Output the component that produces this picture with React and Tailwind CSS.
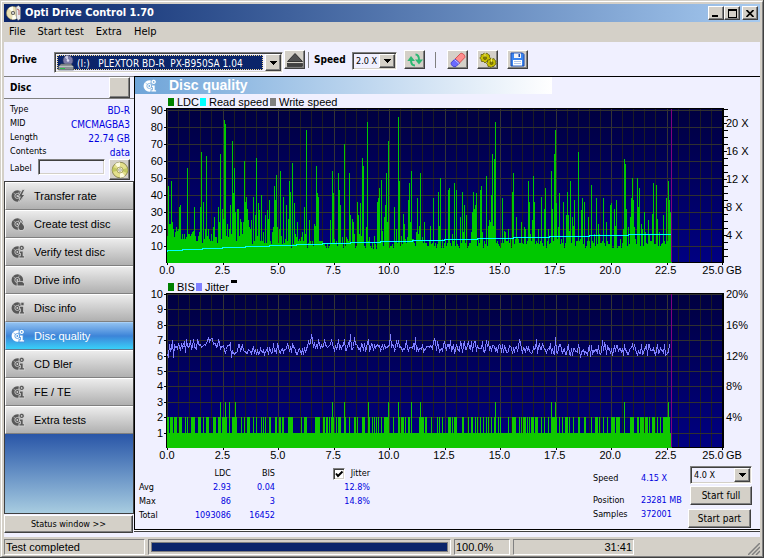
const UI = 'font-["DejaVu_Sans_Condensed","DejaVu_Sans",sans-serif]';
const ARIAL = 'font-["Liberation_Sans",Arial,sans-serif]';

const raised =
  'border border-t-white border-l-white border-r-[#404040] border-b-[#404040] bg-[#d4d0c8] shadow-[inset_-1px_-1px_0_#808080]';
const sunken = 'border border-t-[#808080] border-l-[#808080] border-r-white border-b-white';
const sunkenDeep = `${sunken} shadow-[inset_1px_1px_0_#404040,inset_-1px_-1px_0_#d4d0c8]`;

// plot area inside the 625x185 chart drawing
const LEFT = 32;
const TOP = 15;
const BOTTOM = 169;
const RIGHT = 588;
const SAMPLES = 505;

const LDC_HEAD = [
  16, 45, 23, 23, 48, 24, 20, 15, 18, 21, 19, 20, 33, 34, 14, 17, 14, 17, 14, 15, 56, 17, 17, 16, 17, 18, 19, 33, 16, 13,
  13, 16, 18, 33, 65, 12, 36, 14, 20, 63, 16, 20, 14, 13, 17, 13, 21, 27, 15, 15, 12, 33, 24, 64, 14, 32, 26, 84, 82, 16,
  23, 15, 20, 34, 17, 72, 41, 56, 30, 13, 32, 32, 16, 26, 24, 17, 24, 60, 36, 39, 32, 25, 21, 20, 25, 11, 39, 13, 28, 62,
  16, 35, 31, 13, 40, 13, 18, 12, 28, 12, 31, 26, 37, 13, 11, 18, 21, 45, 37, 52, 21, 12, 20, 54, 16, 11, 39, 12, 14, 34,
  13, 26, 48, 42, 9, 59, 11, 35, 17, 15, 24, 13, 14, 13, 15, 18, 13, 33, 17, 78, 9, 12, 25, 13, 11, 13, 10, 23, 22, 57,
  41, 39, 13, 13, 13, 13, 11, 11, 10, 9, 11, 9, 10, 25, 12, 54, 41, 14, 12, 13, 10, 53, 43, 34, 12, 15, 9, 70, 10, 15,
  14, 13, 53, 28, 12, 26, 24, 17, 9, 10, 36, 28, 17, 35, 16, 62, 57, 10, 9, 21, 83, 13, 15, 10, 9, 12, 8, 16, 11, 8,
  36, 38, 44, 12, 49, 19, 10, 27, 34, 53, 24, 72,
];

const LDC_PEAKS = {
  227: 33, 229: 20, 231: 86, 232: 48, 234: 16, 236: 29, 237: 23, 240: 15, 241: 37, 242: 47, 243: 24, 244: 54, 249: 18,
  250: 38, 251: 17, 252: 22, 253: 53, 255: 15, 257: 24, 263: 22, 266: 38, 271: 42, 272: 22, 273: 50, 278: 20, 281: 43,
  282: 44, 285: 17, 287: 47, 289: 43, 293: 27, 295: 42, 296: 18, 297: 34, 299: 28, 304: 18, 305: 30, 306: 42, 307: 32,
  308: 34, 309: 41, 313: 43, 314: 45, 315: 18, 319: 51, 321: 22, 322: 25, 323: 24, 324: 40, 325: 64, 326: 22, 327: 61,
  328: 83, 335: 38, 337: 19, 338: 18, 341: 20, 345: 42, 346: 53, 349: 27, 350: 15, 354: 24, 357: 21, 358: 20, 361: 48,
  362: 36, 363: 17, 365: 25, 366: 51, 367: 36, 371: 20, 374: 39, 377: 32, 378: 44, 381: 20, 384: 54, 385: 32, 387: 64,
  388: 78, 389: 35, 391: 21, 392: 41, 396: 36, 399: 28, 400: 42, 401: 28, 402: 19, 403: 48, 405: 27, 406: 22, 407: 37,
  411: 65, 414: 31, 415: 38, 417: 36, 421: 27, 424: 46, 427: 17, 429: 38, 431: 23, 432: 17, 436: 38, 439: 24, 443: 34,
  444: 35, 447: 32, 448: 22, 449: 37, 456: 20, 457: 61, 458: 58, 459: 32, 461: 21, 463: 27, 464: 38, 465: 50, 466: 37,
  467: 21, 470: 50, 471: 33, 472: 44, 474: 23, 475: 20, 477: 30, 478: 18, 481: 25, 482: 17, 485: 29, 486: 47, 489: 46,
  490: 26, 492: 18, 496: 28, 499: 38, 501: 48, 502: 37, 503: 30, 504: 27,
};

// [first, last] sample of every run that reaches 2
const BIS_RUNS = [
  [0, 1], [3, 5], [7, 9], [12, 14], [18, 18], [20, 20], [24, 27], [31, 33], [36, 36], [39, 41], [46, 48], [51, 53],
  [55, 59], [62, 62], [65, 69], [74, 74], [77, 77], [80, 82], [86, 86], [89, 89], [94, 94], [96, 96], [98, 98],
  [102, 103], [108, 109], [112, 113], [115, 116], [121, 125], [134, 134], [137, 139], [148, 152], [156, 157],
  [159, 160], [162, 162], [164, 166], [169, 169], [171, 173], [177, 178], [182, 182], [187, 188], [190, 190],
  [195, 197], [201, 202], [205, 205], [207, 207], [209, 209], [211, 211], [214, 214], [217, 221], [226, 226],
  [231, 232], [234, 236], [238, 238], [241, 242], [244, 244], [252, 256], [258, 259], [264, 264], [270, 270],
  [272, 272], [275, 275], [281, 283], [285, 285], [287, 289], [295, 296], [301, 301], [304, 305], [308, 308],
  [310, 310], [313, 313], [316, 316], [319, 319], [321, 321], [324, 324], [327, 328], [331, 331], [333, 333],
  [341, 341], [345, 348], [352, 352], [354, 354], [356, 358], [360, 360], [362, 362], [364, 366], [368, 370],
  [374, 374], [377, 377], [381, 381], [384, 389], [392, 392], [395, 395], [398, 400], [402, 402], [406, 406],
  [411, 412], [417, 418], [424, 424], [428, 430], [432, 432], [436, 436], [440, 440], [444, 447], [449, 452],
  [457, 457], [463, 466], [470, 471], [473, 476], [478, 480], [482, 482], [485, 487], [490, 490], [493, 493],
  [496, 502], [504, 504],
];
const BIS_THREES = [53, 58, 62, 68, 165, 177, 201, 221, 231, 244, 253, 328, 384, 388, 457, 501];

// [first sample, level]; the level drifts linearly up to the next entry
const JITTER_BASE = [[0, 6.2], [5, 6.6], [12, 6.4], [20, 6.6], [40, 6.8], [55, 6.6], [66, 6.35], [110, 6.4], [138, 6.4], [145, 6.7], [230, 6.6], [340, 6.5], [420, 6.3], [504, 6.35]];
const JITTER_PEAKS = { 0: 6.1, 6: 5.9, 19: 7.1, 43: 7.1, 64: 5.9, 144: 7.4, 183: 7.4, 187: 7.2, 201: 7.1, 223: 7.4, 239: 7, 248: 7.2, 267: 7.1, 283: 7, 319: 7, 352: 7, 369: 7.1, 388: 7.2, 435: 7, 437: 6.8, 413: 5.9 };

function noise(seed) {
  let s = seed;
  return () => {
    s = (s * 16807) % 2147483647;
    return s / 2147483647;
  };
}

function ldcSeries() {
  const rnd = noise(77);
  return Array.from({ length: SAMPLES }, (_, i) => LDC_HEAD[i] ?? LDC_PEAKS[i] ?? Math.round(9 + rnd() * 5));
}

function bisSeries() {
  const out = new Array(SAMPLES).fill(1);
  BIS_RUNS.forEach(([a, b]) => out.fill(2, a, b + 1));
  BIS_THREES.forEach((i) => (out[i] = 3));
  return out;
}

function jitterSeries() {
  const rnd = noise(4242);
  return Array.from({ length: SAMPLES - 2 }, (_, i) => {
    if (JITTER_PEAKS[i]) return JITTER_PEAKS[i];
    const k = Math.max(1, JITTER_BASE.findIndex(([x]) => x > i));
    const [x0, a] = JITTER_BASE[k - 1];
    const [x1, b] = JITTER_BASE[k];
    const level = a + ((b - a) * (i - x0)) / (x1 - x0);
    const r = rnd();
    return level + (r > 0.88 ? 0.4 : (r - 0.5) * 0.6);
  });
}

function barPath(series, perUnit) {
  return `M${LEFT} ${BOTTOM}${series.map((v, i) => `V${BOTTOM - Math.round(v * perUnit)}H${LEFT + i + 1}`).join('')}V${BOTTOM}Z`;
}

const ldcPath = barPath(ldcSeries(), 1.7);
const bisPath = barPath(bisSeries(), 15.4);
const jitterPath = 'M' + jitterSeries().map((v, i) => `${LEFT + i} ${Math.round(BOTTOM - v * 15.4)}`).join('L');

const SPEED_STEPS = [182, 202, 222, 245, 269, 296, 322, 350, 380, 412, 444, 477, 513, 549, 589, 628, 671];
const speedPath = 'M32 157V156' + SPEED_STEPS.map((x, i) => `H${x - 135}V${155 - i}`).join('');

function Plot({ id, rows, labels, label, children }) {
  return (
    <svg viewBox="0 0 625 185" role="img" aria-label={label} className={`block w-full h-auto text-[11px] ${ARIAL}`}>
      <defs>
        <linearGradient id={id} x1="0" y1="0" x2="0" y2="1">
          <stop offset="0" stopColor="#000040" />
          <stop offset="1" stopColor="#000082" />
        </linearGradient>
      </defs>
      <g shapeRendering="crispEdges">
        <rect x={LEFT - 1} y={TOP - 1} width={RIGHT - LEFT + 2} height={BOTTOM - TOP + 1} fill="#000" />
        <rect x={LEFT} y={TOP} width={RIGHT - LEFT - 1} height={BOTTOM - TOP - 1} fill={`url(#${id})`} />
        {Array.from({ length: 50 }, (_, i) => (
          <rect key={i} x={Math.round(LEFT + i * 11.1)} y={TOP} width="1" height={BOTTOM - TOP - 1} fill={i % 5 ? '#1c1c24' : '#343434'} />
        ))}
        {labels.map((v, i) => {
          const y = BOTTOM - Math.round((i + 1) * rows);
          return (
            <g key={v}>
              <rect x={LEFT} y={y} width={RIGHT - LEFT - 1} height="1" fill="#303030" />
              <rect x={LEFT - 3} y={y} width="3" height="1" fill="#000" />
            </g>
          );
        })}
        {Array.from({ length: 11 }, (_, i) => (
          <rect key={i} x={Math.round(LEFT + i * 55.5)} y={BOTTOM} width="1" height="2" fill="#000" />
        ))}
      </g>
      {labels.map((v, i) => (
        <text key={v} x={LEFT - 4} y={BOTTOM - Math.round((i + 1) * rows) + 4} textAnchor="end">{v}</text>
      ))}
      {['0.0', '2.5', '5.0', '7.5', '10.0', '12.5', '15.0', '17.5', '20.0', '22.5', '25.0'].map((v, i) => (
        <text key={v} x={i === 10 ? 578 : LEFT + i * 55.4} y="180" textAnchor="middle">{v}</text>
      ))}
      <text x="591" y="180">GB</text>
      {children}
      <rect x="536" y={TOP} width="1" height={BOTTOM - TOP - 1} fill="#800080" shapeRendering="crispEdges" />
    </svg>
  );
}

function QualityChart() {
  return (
    <Plot id="ldcBack" label="LDC and read speed" rows={17.03} labels={[10, 20, 30, 40, 50, 60, 70, 80, 90]}>
      <g shapeRendering="crispEdges">
        <rect x="33" y="4" width="6" height="8" fill="#008000" />
        <rect x="65" y="4" width="6" height="8" fill="#00ffff" />
        <rect x="135" y="4" width="6" height="8" fill="#808080" />
        {Array.from({ length: 22 }, (_, i) => (
          <rect key={i} x="589" y={BOTTOM - 7 - i * 7} width={i % 4 === 3 ? 3 : 4} height="1" fill="#000" />
        ))}
        <path d={ldcPath} fill="#00c800" />
        <path d={speedPath} transform="translate(0.5 0.5)" fill="none" stroke="#00ffff" />
      </g>
      <text x="42" y="12">LDC</text>
      <text x="74" y="12">Read speed</text>
      <text x="144" y="12">Write speed</text>
      {[4, 8, 12, 16, 20].map((v) => (
        <text key={v} x="591" y={BOTTOM - v * 7 + 4}>{v} X</text>
      ))}
    </Plot>
  );
}

function JitterChart() {
  return (
    <Plot id="bisBack" label="BIS and jitter" rows={15.4} labels={[1, 2, 3, 4, 5, 6, 7, 8, 9, 10]}>
      <g shapeRendering="crispEdges">
        <rect x="33" y="4" width="6" height="8" fill="#008000" />
        <rect x="61" y="4" width="6" height="8" fill="#8080ff" />
        <rect x="96" y="1" width="6" height="3" fill="#000" />
        <path d={bisPath} fill="#10c800" />
        <path d={jitterPath} transform="translate(0.5 0.5)" fill="none" stroke="#8080ff" />
      </g>
      <text x="42" y="12">BIS</text>
      <text x="70" y="12">Jitter</text>
      {[4, 8, 12, 16, 20].map((v) => (
        <text key={v} x="591" y={BOTTOM - Math.round(v * 7.7) + 4}>{v}%</text>
      ))}
    </Plot>
  );
}

const BADGES = {
  bolt: 'M12.500 1L8.500 8H10.500L8.500 14L14 6.500H11.500L14 1Z',
  drop: 'M10.500 5C12.500 8 14 9 14 11A3 3 0 0 1 8 11C8 9 9.500 8 10.500 5Z',
  check: 'M11.500 0.800A2.300 2.300 0 1 1 11.400 0.800Z M9.500 7H12.500V12H14V13.500H9V12H10.500V8.500H9.500Z',
  drive: 'M7 9.500H12L14 11.500V13.500H7Z',
  info: 'M11 2H13.500V4.500H11Z M9.500 6.500H13V12H14V13.500H9.500V12H10.500V8H9.500Z',
};

function DiscIcon({ badge, className, hole = '#d4d4d4' }) {
  return (
    <svg viewBox="0 0 15 15" className={`size-[14px] shrink-0 ${className}`} fill="currentColor" aria-hidden="true">
      <circle cx="6.800" cy="7.500" r="6.200" />
      <circle cx="6.800" cy="7.500" r="2.700" fill="none" stroke={hole} strokeWidth="0.900" />
      <circle cx="6.800" cy="7.500" r="1" fill={hole} />
      <path d="M2.500 4L5 6M9 2.500L8 5" stroke={hole} strokeWidth="0.600" />
      <path d={BADGES[badge]} stroke={hole} strokeWidth="1.800" />
      <path d={BADGES[badge]} />
      {badge === 'check' && <circle cx="11.400" cy="3.100" r="0.900" fill={hole} />}
    </svg>
  );
}

function Cd({ className }) {
  return (
    <svg viewBox="0 0 18 18" className={className} aria-hidden="true">
      <circle cx="9" cy="9" r="7.800" fill="#e4e08c" stroke="#77733c" strokeWidth="0.800" />
      <path d="M9 9L4 3A8 8 0 0 1 9 1.300Z M9 9L14 15A8 8 0 0 1 9 16.700Z" fill="#fffde0" />
      <path d="M9 9L16.500 7A8 8 0 0 1 16 12Z M9 9L1.500 11A8 8 0 0 1 2 6Z" fill="#c2c860" />
      <circle cx="9" cy="9" r="3" fill="#f4f0c0" stroke="#99955a" strokeWidth="0.800" />
      <circle cx="9" cy="9" r="1.300" fill="#fff" stroke="#777" strokeWidth="0.600" />
    </svg>
  );
}

function AppLogo() {
  return (
    <svg viewBox="0 0 16 16" className="size-4 shrink-0" aria-hidden="true">
      <circle cx="7" cy="8" r="6.600" fill="#e9dfb4" stroke="#8c7f54" strokeWidth="0.600" />
      <path d="M7 8L2.500 3.200A6.600 6.600 0 0 1 7 1.400Z M7 8L11 13A6.600 6.600 0 0 1 6 14.500Z" fill="#fffef2" />
      <circle cx="7" cy="8" r="2" fill="#555" />
      <circle cx="7" cy="8" r="0.900" fill="#fff" />
      <path d="M10 2L12.500 0.500L14.500 2.500V14L12 15.500L10.500 13Z" fill="#e8e8ee" stroke="#666" strokeWidth="0.500" />
      <path d="M11 4L13 5V10" fill="none" stroke="#b04040" strokeWidth="0.800" />
    </svg>
  );
}

function DriveIcon() {
  return (
    <svg viewBox="0 0 16 16" className="size-4" aria-hidden="true">
      <circle cx="10" cy="5.500" r="5" fill="#7c7ca8" stroke="#3c3c64" strokeWidth="0.600" />
      <path d="M10 5.500L6.500 2A5 5 0 0 1 10 0.500Z" fill="#c8c8e4" />
      <circle cx="10" cy="5.500" r="1.300" fill="#dcdcf0" />
      <path d="M3 9H13L15.500 11.500V15H0.500V11.500Z" fill="#8a9094" stroke="#4c5458" strokeWidth="0.600" />
      <path d="M1 11.500H15" stroke="#c4cacc" strokeWidth="0.800" />
      <path d="M2 13.500H7" stroke="#28c048" />
    </svg>
  );
}

function Arrow() {
  return (
    <svg viewBox="0 0 7 4" className="w-[7px] h-1" shapeRendering="crispEdges" aria-hidden="true">
      <path d="M0 0H7L3.500 4Z" />
    </svg>
  );
}

function Combo({ label, value, className }) {
  return (
    <span className={`relative flex h-[18px] ${sunkenDeep} ${className}`}>
      <select aria-label={label} defaultValue={value} className="w-full appearance-none bg-transparent pl-[3px] text-[9px] leading-[16px] outline-none">
        <option>{value}</option>
      </select>
      <span className={`pointer-events-none absolute top-px right-px bottom-px flex w-4 items-center justify-center ${raised}`}>
        <Arrow />
      </span>
    </span>
  );
}

function ToolButton({ label, children }) {
  return (
    <button type="button" aria-label={label} className={`flex h-[19px] w-[21px] items-center justify-center ${raised}`}>
      {children}
    </button>
  );
}

function TitleBar() {
  return (
    <header className="flex h-[18px] items-center bg-linear-to-r from-[#0a246a] to-[#a6caf0] pl-[2px] pr-[2px]">
      <AppLogo />
      <h1 className="ml-[3px] flex-1 text-[11px] leading-[18px] font-bold text-white">Opti Drive Control 1.70</h1>
      <button type="button" aria-label="Minimize" className={`flex h-[14px] w-4 items-end pb-[2px] pl-[3px] ${raised}`}>
        <span className="h-[2px] w-[6px] bg-black" />
      </button>
      <button type="button" aria-label="Maximize" className={`flex h-[14px] w-4 items-center justify-center ${raised}`}>
        <span className="h-[9px] w-[9px] border border-t-2 border-black" />
      </button>
      <button type="button" aria-label="Close" className={`ml-[2px] flex h-[14px] w-4 items-center justify-center ${raised}`}>
        <svg viewBox="0 0 8 7" className="h-[7px] w-2" aria-hidden="true">
          <path d="M0.500 0L7.500 7M7.500 0L0.500 7" stroke="#000" strokeWidth="1.700" />
        </svg>
      </button>
    </header>
  );
}

function Toolbar() {
  return (
    <div className="flex h-[34px] items-start pt-2 pl-[6px]">
      <label htmlFor="drive" className="w-11 text-[10px] leading-[20px] font-bold">Drive</label>
      <span className={`relative mt-[2px] flex h-[21px] w-[229px] ${sunkenDeep}`}>
        <select
          id="drive"
          defaultValue="drive"
          className="m-[2px] mr-[19px] w-full appearance-none border border-dotted border-[#f5db95] bg-[#0a246a] pl-[19px] text-[10px] leading-[15px] whitespace-pre text-white outline-none"
        >
          <option value="drive">{'(I:)\u00a0\u00a0\u00a0PLEXTOR BD-R\u00a0\u00a0PX-B950SA 1.04'}</option>
        </select>
        <span className="pointer-events-none absolute top-[2px] left-[3px]"><DriveIcon /></span>
        <span className={`pointer-events-none absolute top-px right-px bottom-px flex w-4 items-center justify-center ${raised}`}>
          <Arrow />
        </span>
      </span>
      <div className="ml-px flex">
        <ToolButton label="Eject">
          <svg viewBox="0 0 16 14" className="h-[14px] w-4" aria-hidden="true">
            <path d="M8 0.500L15.500 8.500H0.500Z" fill="#505050" stroke="#1c1c1c" strokeWidth="0.800" />
            <rect x="0.500" y="10.500" width="15" height="3" fill="#404040" stroke="#1c1c1c" strokeWidth="0.600" />
          </svg>
        </ToolButton>
      </div>
      <span className="mt-[2px] ml-[3px] h-4 w-px bg-[#808080]" />
      <span className="ml-[5px] w-[38px] text-[10px] leading-[20px] font-bold">Speed</span>
      <Combo label="Speed" value="2.0 X" className="mt-[2px] w-[45px]" />
      <div className="ml-[7px] flex">
        <ToolButton label="Refresh">
          <svg viewBox="0 0 16 14" className="h-[14px] w-4" fill="none" stroke="#2cb873" strokeWidth="2" aria-hidden="true">
            <path d="M8 12.500C5 12.500 4 10.500 4 7" />
            <path d="M0.300 8L4 3L8 8Z" fill="#2cb873" stroke="none" />
            <path d="M8.500 1.500C11.500 1.500 12 4 12 7" />
            <path d="M8 6.500L16 6.500L12 11.500Z" fill="#2cb873" stroke="none" />
          </svg>
        </ToolButton>
      </div>
      <span className="mt-[2px] ml-[10px] h-4 w-px bg-[#808080]" />
      <div className="ml-[11px] flex gap-[9px]">
        <ToolButton label="Erase disc">
          <svg viewBox="0 0 16 16" className="size-4" strokeLinejoin="round" aria-hidden="true">
            <path d="M5 7L10.500 1.500C12 0.500 15.500 3 14.800 5.500L9.500 11Z" fill="#ff8c8c" stroke="#d04848" strokeWidth="0.900" />
            <path d="M5 7L9.500 11L6 14.500C3.500 15.500 0.500 13 1.200 10.500Z" fill="#6a6aff" stroke="#3c3cc8" strokeWidth="0.900" />
            <path d="M4.500 7.500L9 11.500" stroke="#e8e8ff" strokeWidth="0.800" />
          </svg>
        </ToolButton>
        <ToolButton label="Options">
          <svg viewBox="0 0 18 16" className="h-4 w-[18px]" fill="#c8c000" stroke="#55500a" strokeWidth="0.700" aria-hidden="true">
            <path d="M5 1L6.500 2L8 1L9 2.500L10.500 3V5L11.500 6.500L10 8L9.500 9.500H7.500L6 11L4.500 9.500L2.500 9.500L2 7.500L0.800 6L2 4.500V2.500L4 2.500Z" />
            <path d="M12 6L13.500 7L15 6.500L15.500 8L17 9L16.500 10.500L17.200 12L15.500 13L15 14.500H13L12 15.500L10.500 14.500L9 14.500L8.500 12.500L7.500 11.500L8.500 10L8.500 8L10.500 8Z" />
            <circle cx="6" cy="6" r="1.500" fill="#8c8400" />
            <circle cx="12.500" cy="11" r="1.500" fill="#8c8400" />
            <path d="M6 1V5M12.500 6V10" stroke="#fff88a" />
          </svg>
        </ToolButton>
        <ToolButton label="Save">
          <svg viewBox="0 0 15 15" className="size-[15px]" aria-hidden="true">
            <path d="M1 1H12.500L14 2.500V14H1Z" fill="#3c86f0" stroke="#1c4cb0" />
            <rect x="4" y="1.500" width="7" height="4.500" fill="#f4f4f4" />
            <rect x="8.500" y="2" width="1.500" height="3" fill="#1c4cb0" />
            <rect x="3" y="8" width="9" height="5.500" fill="#fff" />
            <path d="M4 9.500H11M4 11.500H11" stroke="#9ab8e8" strokeWidth="0.800" />
          </svg>
        </ToolButton>
      </div>
    </div>
  );
}

const DISC_ROWS = [
  ['Type', 'BD-R'],
  ['MID', 'CMCMAGBA3'],
  ['Length', '22.74 GB'],
  ['Contents', 'data'],
];

const NAV = [
  ['Transfer rate', 'bolt'],
  ['Create test disc', 'drop'],
  ['Verify test disc', 'check'],
  ['Drive info', 'drive'],
  ['Disc info', 'info'],
  ['Disc quality', 'check'],
  ['CD Bler', 'check'],
  ['FE / TE', 'check'],
  ['Extra tests', 'check'],
];

function Sidebar() {
  return (
    <aside className="flex w-[130px] shrink-0 flex-col">
      <div className="flex h-[23px] items-center justify-between border-t border-b border-[#808080] pr-1 pl-[6px]">
        <h2 className="text-[10px] font-bold">Disc</h2>
        <button type="button" aria-label="Disc details" className={`h-[21px] w-[21px] ${raised}`} />
      </div>
      <dl className="pt-1 pr-1 pl-[6px] text-[9px]">
        {DISC_ROWS.map(([k, v]) => (
          <div key={k} className="flex h-[14px] items-center justify-between">
            <dt>{k}</dt>
            <dd className="text-[10px] text-[#0000e0]">{v}</dd>
          </div>
        ))}
      </dl>
      <div className="flex h-[22px] items-start pr-1 pl-[6px] text-[9px]">
        <label htmlFor="disc-label" className="w-7 leading-[18px]">Label</label>
        <input id="disc-label" type="text" className={`h-4 w-[67px] bg-transparent px-1 outline-none ${sunkenDeep}`} />
        <button type="button" aria-label="Read disc label" className={`ml-auto flex h-[21px] w-[21px] items-center justify-center ${raised}`}>
          <Cd className="size-[18px]" />
        </button>
      </div>
      <nav className="flex flex-1 flex-col border border-[#404040] bg-linear-to-b from-[#2450a4] from-[75%] to-[#a8cce0]">
        {NAV.map(([name, badge]) => {
          const on = name === 'Disc quality';
          return (
            <button
              key={name}
              type="button"
              aria-current={on ? 'page' : undefined}
              className={`flex h-7 items-center gap-[9px] border-t border-b border-l pl-[5px] text-[11px] ${ARIAL} ${
                on
                  ? 'border-t-[#a8d0f8] border-b-[#607890] border-l-[#a8d0f8] bg-linear-to-b from-[#90c0f0] via-[#3c84d8] to-[#38d0f8] text-white'
                  : 'border-t-white border-b-[#808080] border-l-white bg-linear-to-b from-[#ececec] to-[#b0b0b0] text-black'
              }`}
            >
              <DiscIcon badge={badge} className={on ? 'text-white' : 'text-[#585858]'} hole={on ? '#4c94e0' : '#d0d0d0'} />
              {name}
            </button>
          );
        })}
      </nav>
      <button type="button" className={`mt-px mr-px h-[18px] text-[9px] leading-[16px] ${raised}`}>
        Status window &gt;&gt;
      </button>
    </aside>
  );
}

function Results() {
  return (
    <div className="flex flex-1 justify-between pr-2 pl-1 text-[9px]">
      <table className="mt-[3px] h-min leading-[13px]">
        <thead>
          <tr className="h-[13px]">
            <td className="w-11" />
            <th scope="col" className="w-12 text-right font-normal">LDC</th>
            <th scope="col" className="w-11 text-right font-normal">BIS</th>
            <th scope="col" className="w-[95px] font-normal">
              <label className="flex h-[13px] items-center justify-end gap-[6px]">
                <span className="relative flex size-3">
                  <input
                    type="checkbox"
                    defaultChecked
                    className={`peer size-3 appearance-none bg-white ${sunkenDeep}`}
                  />
                  <svg viewBox="0 0 12 12" className="pointer-events-none absolute inset-0 hidden size-3 peer-checked:block" aria-hidden="true">
                    <path d="M3 5.500L5 8L9.500 3.500" fill="none" stroke="#000" strokeWidth="2" />
                  </svg>
                </span>
                Jitter
              </label>
            </th>
          </tr>
        </thead>
        <tbody className="text-right text-[#0000e0]">
          <tr className="h-[14px]">
            <th scope="row" className="text-left font-normal text-black">Avg</th>
            <td>2.93</td>
            <td>0.04</td>
            <td>12.8%</td>
          </tr>
          <tr className="h-[14px]">
            <th scope="row" className="text-left font-normal text-black">Max</th>
            <td>86</td>
            <td>3</td>
            <td>14.8%</td>
          </tr>
          <tr className="h-[14px]">
            <th scope="row" className="text-left font-normal text-black">Total</th>
            <td>1093086</td>
            <td>16452</td>
            <td />
          </tr>
        </tbody>
      </table>
      <div className="flex">
        <dl className="grid w-[95px] grid-cols-[48px_1fr] grid-rows-[30px_14px_14px] items-center whitespace-nowrap">
          <dt>Speed</dt>
          <dd className="text-[#0000e0]">4.15 X</dd>
          <dt>Position</dt>
          <dd className="text-[#0000e0]">23281 MB</dd>
          <dt>Samples</dt>
          <dd className="text-[#0000e0]">372001</dd>
        </dl>
        <div className="flex w-16 flex-col pt-[2px]">
          <Combo label="Test speed" value="4.0 X" className="ml-[2px]" />
          <button type="button" className={`mt-[2px] ml-[2px] h-[19px] text-[10px] leading-[16px] ${raised}`}>Start full</button>
          <button type="button" className={`mt-1 mr-px h-[19px] text-[10px] leading-[16px] ${raised}`}>Start part</button>
        </div>
      </div>
    </div>
  );
}

function StatusBar() {
  return (
    <footer className={`flex h-[18px] gap-[3px] bg-[#d4d0c8] pt-[2px] text-[11px] leading-[15px] ${ARIAL}`}>
      <span className={`w-[141px] pl-px ${sunken}`}>Test completed</span>
      <div role="progressbar" aria-label="Test progress" aria-valuenow={100} className={`flex-1 p-[2px] ${sunken}`}>
        <div className="h-full border border-[#808080] bg-[#0a246a]" />
      </div>
      <span className={`w-[56px] pl-px ${sunken}`}>100.0%</span>
      <span className={`w-[121px] pr-px text-right ${sunken}`}>31:41</span>
      <svg viewBox="0 0 12 12" className="mt-1 ml-[111px] size-3 shrink-0" stroke="#808080" aria-hidden="true">
        <path d="M0 12L12 0M4 12L12 4M8 12L12 8" strokeWidth="1.500" />
      </svg>
    </footer>
  );
}

export default function App() {
  return (
    <div className={`flex min-h-screen flex-col border-r border-b border-[#404040] bg-[#d4d0c8] pt-px pl-px text-black ${UI}`}>
      <div className="flex flex-1 flex-col border border-t-white border-l-white border-r-[#808080] border-b-[#808080] p-[2px] pb-px">
        <TitleBar />
        <nav className="flex h-5 items-center gap-3 pl-[5px] text-[11px]">
          {['File', 'Start test', 'Extra', 'Help'].map((item) => (
            <button key={item} type="button">{item}</button>
          ))}
        </nav>
        <div className="flex flex-1 flex-col bg-[#f0f0ff] pb-1">
          <Toolbar />
          <div className="flex flex-1">
            <Sidebar />
            <main className="mb-[3px] flex min-w-0 flex-1 flex-col border-t border-b border-l border-black shadow-[0_1px_0_#fff,0_2px_0_#404040]">
              <div className="flex h-[17px] w-2/3 items-center gap-3 bg-linear-to-r from-[#6ea4d8] to-white pl-2 text-white">
                <DiscIcon badge="check" className="text-white" hole="#78acdc" />
                <h2 className={`text-[14px] leading-[17px] font-bold ${ARIAL}`}>Disc quality</h2>
              </div>
              <QualityChart />
              <JitterChart />
              <Results />
            </main>
          </div>
        </div>
        <StatusBar />
      </div>
    </div>
  );
}
